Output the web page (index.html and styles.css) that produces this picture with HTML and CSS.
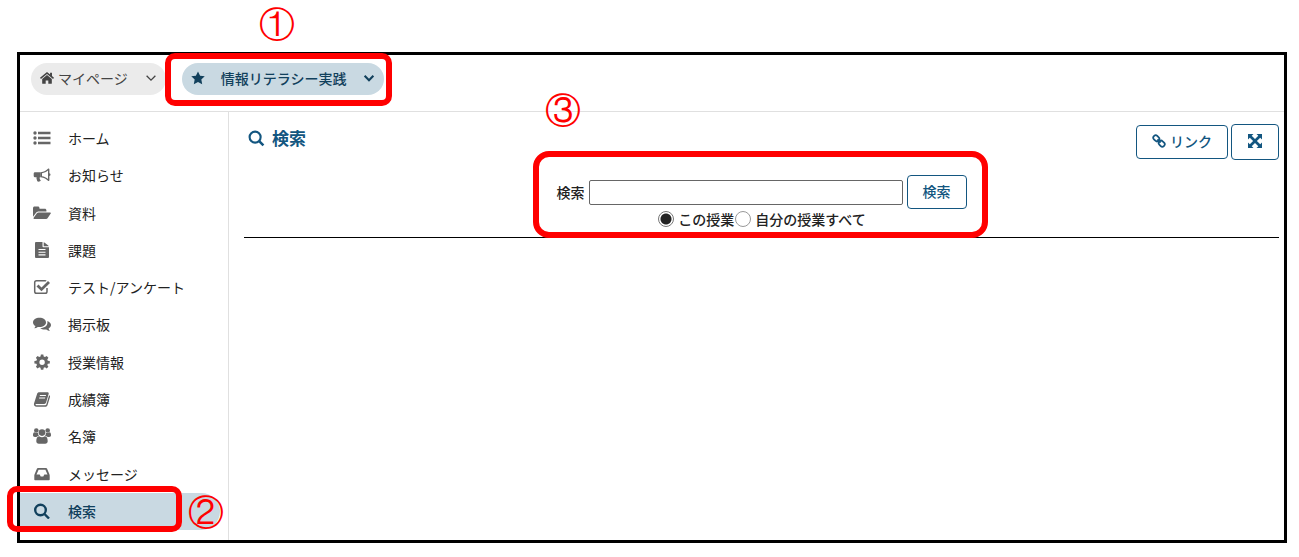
FILE: index.html
```html
<!DOCTYPE html>
<html lang="ja">
<head>
    <meta charset="UTF-8">
    <meta name="viewport" content="width=device-width, initial-scale=1.0">
    <title>検索</title>
    <link rel="stylesheet" href="styles.css">
</head>
<body>
    <div class="frame">
        <header class="topbar">
            <div class="tab">
                <a href="#"><svg class="icon" viewBox="0 0 16 16"><path d="M8 4.600l5.500 4.400V14a.6.6 0 0 1-.6.6H9.500v-3.800h-3v3.800H3.100a.6.6 0 0 1-.6-.6V9z"/><path d="M8 1L0 7.700l1.100 1.300L8 3.300 14.900 9 16 7.700l-2.300-2V2h-2.200v1.900z"/></svg>マイページ</a>
                <button class="toggle" aria-label="マイページ"><svg class="icon" viewBox="0 0 16 16"><path class="line" d="M3 5.500l5 5 5-5"/></svg></button>
            </div>
            <div class="tab current">
                <a href="#"><svg class="icon" viewBox="0 0 16 16"><path d="M8 .6l2.400 4.800 5.300.7-3.900 3.700 1 5.200L8 12.500 3.200 15l1-5.200L.3 6.100l5.300-.7z"/></svg>情報リテラシー実践</a>
                <button class="toggle" aria-label="情報リテラシー実践"><svg class="icon" viewBox="0 0 16 16"><path class="line bold" d="M3 5.500l5 5 5-5"/></svg></button>
            </div>
        </header>
        <div class="columns">
            <nav class="sidebar">
                <a href="#"><svg class="icon" viewBox="0 0 18 16"><path d="M5 1.700h12.500v2.600H5zM5 6.700h12.500v2.600H5zM5 11.700h12.500v2.600H5z"/><circle cx="2" cy="3" r="1.700"/><circle cx="2" cy="8" r="1.700"/><circle cx="2" cy="13" r="1.700"/></svg>ホーム</a>
                <a href="#"><svg class="icon" viewBox="0 0 18 16"><path d="M2 5.200h5.800v5.100h-1c-.4 1.400.1 2.300 1 3.200-.7 1.300-2.600 1.400-3.500.7-.5-1.700-1.100-2.500-.7-3.900H2A1.300 1.300 0 0 1 .7 9V6.500A1.300 1.300 0 0 1 2 5.200z"/><path fill-rule="evenodd" d="M7.800 5.200C11 5 13.500 3.300 15.300 1.500c.7 0 1.100.4 1.100 1v3.800c1.500.3 1.500 2.500 0 2.800v4c0 .6-.4 1-1.100 1-1.800-1.800-4.300-3.500-7.500-3.800zM9 6.300v3c2.300.3 4.300 1.300 6 2.700V3.600C13.300 5 11.300 6 9 6.300z"/></svg>お知らせ</a>
                <a href="#"><svg class="icon" viewBox="0 0 18 16"><path d="M0 11.800V3.200C0 2.300.7 1.600 1.600 1.600h3.300c.9 0 1.600.7 1.600 1.600v.5h5.300c.9 0 1.600.7 1.600 1.600v1.300H5.700c-1 0-2.100.6-2.800 1.400z"/><path d="M5.700 7.400h11.400c.8 0 1.100.5.600 1.200l-3 4.300c-.4.600-1.200 1-2 1H1.300c-.8 0-1.100-.5-.6-1.200l3-4.300c.4-.6 1.200-1 2-1z"/></svg>資料</a>
                <a href="#"><svg class="icon" viewBox="0 0 18 16"><path fill-rule="evenodd" d="M3 0h6.500v4.500c0 .5.400.8.800.8H16V15a1 1 0 0 1-1 1H3a1 1 0 0 1-1-1V1a1 1 0 0 1 1-1zm2.500 7v1.100h7V7zm0 2.700v1.100h7V9.700zm0 2.600v1.100h7v-1.100z"/><path d="M10.700.2c.3.100.5.200.7.400l3.900 2.900.4.700h-5z"/></svg>課題</a>
                <a href="#"><svg class="icon" viewBox="0 0 18 16"><path class="line" d="M14 9v3.500a1.800 1.800 0 0 1-1.800 1.800H3.500a1.800 1.800 0 0 1-1.800-1.800v-9A1.800 1.800 0 0 1 3.500 1.700h8.700c.4 0 .7.100 1 .3"/><path d="M3.500 7.400l2-1.900 3 2.900 6.500-6.500 2 2-8.500 8.400z"/></svg>テスト/アンケート</a>
                <a href="#"><svg class="icon" viewBox="0 0 18 16"><path d="M6.500 1.800c3.600 0 6.500 2 6.500 4.600S10.100 11 6.500 11c-.6 0-1.200 0-1.700-.1-1 .8-2.200 1.300-3.600 1.400.6-.6 1.100-1.300 1.300-2.200C1 9.200 0 7.900 0 6.400c0-2.600 2.900-4.600 6.500-4.600z"/><path d="M14.300 5.100c2.200.8 3.700 2.300 3.700 4 0 1.500-1 2.700-2.400 3.500.2.900.7 1.600 1.300 2.300-1.400-.2-2.600-.7-3.600-1.500-2.300.4-4.600-.1-6.200-1.200 4.600.1 8.200-2.700 7.200-7.100z"/></svg>掲示板</a>
                <a href="#"><svg class="icon" viewBox="0 0 18 16"><path fill-rule="evenodd" d="M7.900.5h2.400l.4 2 1.300.6L13.700 2l1.700 1.700-1.100 1.700.5 1.300 2 .3v2.400l-2 .4-.5 1.300 1.100 1.600-1.700 1.700-1.700-1.100-1.300.5-.4 2H7.900l-.4-2-1.300-.5-1.600 1.100-1.700-1.700L4 11.100l-.6-1.300-2-.4V7l2-.3L4 5.400 2.900 3.700 4.600 2l1.600 1.100 1.300-.6zM9.100 5.500a2.700 2.700 0 1 0 0 5.400 2.700 2.700 0 0 0 0-5.400z"/></svg>授業情報</a>
                <a href="#"><svg class="icon" viewBox="0 0 18 16"><path fill-rule="evenodd" d="M6.500 1.200h8c.8 0 1.400.7 1.200 1.500l-2.600 8.900c-.3.900-.9 1.300-1.800 1.300H3.200c-.6 0-.8.400-.5.800.2.400.7.500 1.200.5h8.400c.5 0 .8-.2 1-.7l2.800-9.200c.8.300 1.100.9.900 1.700l-2.500 8.200c-.3.900-1.100 1.500-2 1.500H3.700C1.700 15.700.5 14 1 12.500l3.200-9.900c.4-.9 1.300-1.400 2.300-1.400zM7 4l-.3 1h6.100l.3-1zM6.300 6.400l-.3 1h6l.3-1z"/></svg>成績簿</a>
                <a href="#"><svg class="icon" viewBox="0 0 18 16"><circle cx="3.300" cy="2.500" r="2.300"/><circle cx="14.700" cy="2.500" r="2.300"/><circle cx="9" cy="4.600" r="3.300"/><path d="M1.200 4.300c1.300.9 2.700.9 4 .4-.2 1.300.1 2.300.8 3.200-1.100 0-2 .4-2.700 1.100H1.900C.7 9 0 8.400 0 7.300c0-1.300.2-2.700 1.200-3zM16.800 4.300c-1.300.9-2.700.9-4 .4.200 1.300-.1 2.300-.8 3.200 1.100 0 2 .4 2.700 1.100h1.400c1.200 0 1.900-.6 1.900-1.700 0-1.300-.2-2.700-1.200-3z"/><path d="M6.100 8.200c1.800 1.300 4 1.300 5.800 0 2.100.2 2.800 2.400 2.800 5 0 1.600-1 2.500-2.500 2.500H5.800c-1.500 0-2.500-.9-2.500-2.500 0-2.600.7-4.800 2.800-5z"/></svg>名簿</a>
                <a href="#"><svg class="icon" viewBox="0 0 18 16"><path fill-rule="evenodd" d="M5 2h8c.5 0 .9.300 1.100.8l2.300 5.400c.2.500.3.900.3 1.400v4c0 .4-.3.700-.7.700H2c-.4 0-.7-.3-.7-.7v-4c0-.5.100-.9.300-1.400l2.300-5.400C4.100 2.300 4.500 2 5 2zm.6 1.700L3.500 8.600h3.200l1 2h2.600l1-2h3.200l-2.100-4.900z"/></svg>メッセージ</a>
                <a class="selected" href="#"><svg class="icon" viewBox="0 0 18 16"><circle class="line bold" cx="7.500" cy="7" r="5.300"/><path class="line bold" d="M11.500 11l4.500 4.500"/></svg>検索</a>
            </nav>
            <main class="content">
                <div class="heading">
                    <h1><svg class="icon" viewBox="0 0 16 16"><circle class="line thick" cx="6.700" cy="6.700" r="5.200"/><path class="line bold" d="M10.500 10.500l4 4"/></svg>検索</h1>
                    <div class="actions">
                        <button class="btn"><svg class="icon" viewBox="0 0 16 16"><g class="line thick" transform="rotate(45 8 8)"><rect x="0" y="5.300" width="7.300" height="5.400" rx="2.500"/><rect x="8.700" y="5.300" width="7.300" height="5.400" rx="2.500"/><path d="M5.500 8h5"/></g></svg>リンク</button>
                        <button class="btn expand" aria-label="全画面"><svg class="icon" viewBox="0 0 16 16"><path d="M1 1h5.500L4.700 2.800 8 6.100l3.300-3.300L9.500 1H15v5.500l-1.800-1.800L9.900 8l3.300 3.300L15 9.500V15H9.500l1.800-1.800L8 9.900l-3.300 3.300L6.500 15H1V9.500l1.800 1.800L6.100 8 2.800 4.700 1 6.500z"/></svg></button>
                    </div>
                </div>
                <form class="search">
                    <div class="row">
                        <label for="keyword">検索</label>
                        <input type="text" id="keyword">
                        <button type="button" class="btn">検索</button>
                    </div>
                    <div class="scope">
                        <input type="radio" name="scope" id="this-course" checked><label for="this-course">この授業</label>
                        <input type="radio" name="scope" id="all-courses"><label for="all-courses">自分の授業すべて</label>
                    </div>
                </form>
            </main>
        </div>
    </div>

    <div class="mark mark-course"></div>
    <div class="mark mark-menu"></div>
    <div class="mark mark-form"></div>
    <span class="num num-course">①</span>
    <span class="num num-menu">②</span>
    <span class="num num-form">③</span>
</body>
</html>
```
FILE: styles.css
```css
* {
    box-sizing: border-box;
}
body {
    margin: 0;
    padding: 52px 12px 14px 17px;
    background: #fff;
    color: #222;
    font-family: "Noto Sans CJK JP", sans-serif;
    font-size: 14px;
    line-height: 20px;
    position: relative;
}
a {
    color: inherit;
    text-decoration: none;
}
button, input {
    font: inherit;
    color: inherit;
}
.icon {
    width: 14px;
    height: 14px;
    fill: currentColor;
    flex: none;
}
.icon .line {
    fill: none;
    stroke: currentColor;
    stroke-width: 1.5;
}
.icon .thick {
    stroke-width: 2;
}
.icon .bold {
    stroke-width: 2.4;
}
.frame {
    border: 3px solid #000;
    min-height: calc(100vh - 66px);
    display: flex;
    flex-direction: column;
}
.topbar {
    display: flex;
    gap: 16px;
    padding: 8px 11px 16px;
    border-bottom: 1px solid #e0e0e0;
}
.tab {
    display: flex;
    align-items: center;
    gap: 16px;
    height: 32px;
    padding: 0 8px 2px 9px;
    border-radius: 16px;
    background: #ebebeb;
    color: #444;
}
.tab a {
    display: flex;
    align-items: center;
    gap: 4px;
}
.tab.current {
    background: #c9d9e2;
    color: #11405c;
    font-weight: 500;
}
.tab.current a {
    gap: 16px;
}
.toggle {
    display: flex;
    padding: 0;
    border: none;
    background: none;
}
.columns {
    flex: 1;
    display: flex;
}
.sidebar {
    width: 209px;
    padding: 8px 0 10px;
    border-right: 1px solid #e0e0e0;
    display: flex;
    flex-direction: column;
}
.sidebar a {
    flex: 1;
    min-height: 36px;
    display: flex;
    align-items: center;
    gap: 17px;
    padding-left: 13px;
    padding-bottom: 1px;
    margin-right: 8px;
}
.sidebar .icon {
    width: 18px;
    height: 16px;
    color: #666;
}
.sidebar .selected {
    background: #c9d9e2;
    color: #11405c;
    font-weight: 500;
    border-radius: 0 19px 19px 0;
}
.sidebar .selected .icon {
    color: #11405c;
}
.content {
    flex: 1;
    padding: 12px 5px 0 15px;
}
.heading {
    display: flex;
    justify-content: space-between;
    padding-left: 4px;
}
h1 {
    margin: 3px 0 0;
    display: flex;
    align-items: center;
    gap: 7px;
    height: 22px;
    color: #135680;
    font-size: 17px;
    font-weight: 700;
}
h1 .icon {
    width: 17px;
    height: 17px;
}
.actions {
    display: flex;
    align-items: center;
    gap: 3px;
}
.btn {
    display: flex;
    align-items: center;
    justify-content: center;
    gap: 4px;
    height: 34px;
    padding: 0 15px 2px;
    border: 1px solid #135680;
    border-radius: 4px;
    background: #fff;
    color: #135680;
    font-weight: 500;
}
.actions .expand {
    height: 36px;
}
.expand .icon {
    width: 16px;
    height: 16px;
}
.search {
    display: flex;
    flex-direction: column;
    align-items: center;
    padding-top: 15px;
    padding-bottom: 8px;
    border-bottom: 1px solid #000;
    font-weight: 500;
}
.row {
    display: flex;
    align-items: center;
    gap: 4px;
}
.row input {
    width: 314px;
    height: 25px;
    border: 1px solid #666;
    border-radius: 2px;
}
.scope {
    display: flex;
    align-items: center;
}
.scope input {
    appearance: none;
    width: 16px;
    height: 16px;
    margin: 0 4px 0 1px;
    border: 1px solid #999;
    border-radius: 50%;
    background: #fff;
}
.scope input:checked {
    border-color: #777;
    background: radial-gradient(#222 5px, #fff 6px);
}
/* red callouts over the screen */
.mark {
    position: absolute;
    border: 6px solid #f00;
    border-radius: 10px;
    pointer-events: none;
}
.mark-course {
    left: 165px;
    top: 53px;
    width: 227px;
    height: 53px;
}
.mark-menu {
    left: 7px;
    top: 486px;
    width: 175px;
    height: 46px;
}
.mark-form {
    left: 533px;
    top: 151px;
    width: 455px;
    height: 87px;
    border-radius: 16px;
}
.num {
    position: absolute;
    color: #f00;
    font-family: "Liberation Serif", serif;
    font-size: 36px;
    line-height: 36px;
}
.num-course {
    left: 259px;
    top: 7px;
}
.num-menu {
    left: 188px;
    top: 495px;
}
.num-form {
    left: 545px;
    top: 93px;
}
```
